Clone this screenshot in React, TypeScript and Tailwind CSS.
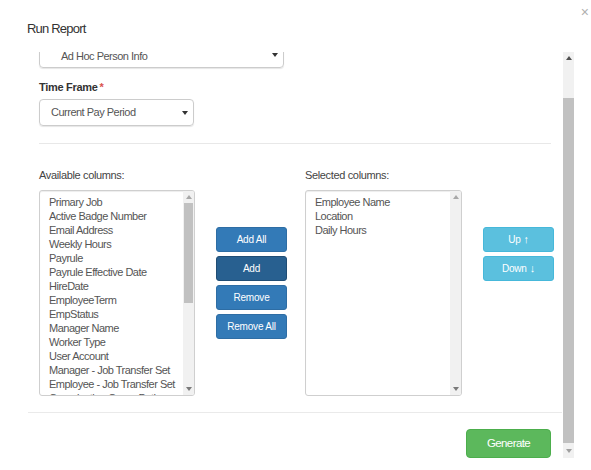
import React from "react";

const available = [
  "Primary Job",
  "Active Badge Number",
  "Email Address",
  "Weekly Hours",
  "Payrule",
  "Payrule Effective Date",
  "HireDate",
  "EmployeeTerm",
  "EmpStatus",
  "Manager Name",
  "Worker Type",
  "User Account",
  "Manager - Job Transfer Set",
  "Employee - Job Transfer Set",
  "Organization Group Path",
];

const selected = ["Employee Name", "Location", "Daily Hours"];

function Caret({ className = "" }: { className?: string }) {
  return (
    <svg width="6" height="4" viewBox="0 0 6 4" className={className}>
      <path d="M0 0 L6 0 L3 4 Z" fill="currentColor" />
    </svg>
  );
}

function CaretUp({ className = "" }: { className?: string }) {
  return (
    <svg width="6" height="4" viewBox="0 0 6 4" className={className}>
      <path d="M0 4 L6 4 L3 0 Z" fill="currentColor" />
    </svg>
  );
}

function ListBox({ items, thumb, width }: { items: string[]; thumb: boolean; width: string }) {
  return (
    <div
      className={`${width} h-[206px] mt-[8px] flex border border-[#cfcfcf] rounded-[3px] shadow-[inset_0_1px_1px_rgba(0,0,0,0.075)] overflow-hidden bg-white`}
    >
      <div className="flex-1 overflow-hidden pt-[4px] pl-[9px] text-[11px] tracking-[-0.5px] leading-[14px] text-[#555]">
        {items.map((it) => (
          <div key={it} className="whitespace-nowrap">
            {it}
          </div>
        ))}
      </div>
      <div className="w-[11px] bg-[#f1f1f1] flex flex-col items-center">
        <div className="h-[12px] flex items-center justify-center text-[#a8a8a8]">
          <CaretUp />
        </div>
        <div className="flex-1 w-full px-[1px]">
          {thumb && <div className="h-[100px] w-full bg-[#c1c1c1]" />}
        </div>
        <div className="h-[12px] flex items-center justify-center text-[#7a7a7a]">
          <Caret />
        </div>
      </div>
    </div>
  );
}

function Btn({ children, cls }: { children: React.ReactNode; cls: string }) {
  return (
    <div
      className={`h-[25px] w-[71px] flex items-center justify-center rounded-[3px] border text-white text-[10px] tracking-[-0.2px] ${cls}`}
    >
      {children}
    </div>
  );
}

export default function App() {
  return (
    <div className="relative w-[591px] h-[470px] bg-white overflow-hidden font-['Liberation_Sans',Arial,sans-serif] text-[#333]">
      <div className="absolute top-[4px] right-[2px] text-[14px] leading-[16px] text-[#b0b0b0]">×</div>
      <div className="h-[52px] pl-[27px] pt-[21px] text-[13px] tracking-[-0.8px] leading-[15px] text-[#333]">Run Report</div>
      <div className="ml-[28px] w-[546px] h-[406px] flex">
        <div className="flex-1 overflow-hidden flex flex-col">
          <div className="pl-[11px] pr-[12px] pb-[16px]">
            <div className="-mt-[11px] h-[27px] w-[245px] border border-[#ccc] rounded-[4px] shadow-[0_1px_1px_rgba(0,0,0,0.1)] flex items-center pt-[3px] pl-[21px] pr-[5px] text-[11px] tracking-[-0.5px] text-[#555]">
              <span className="flex-1 leading-[10px]">Ad Hoc Person Info</span>
              <Caret className="text-[#333] -mt-[3px]" />
            </div>
            <div className="mt-[12px] text-[11px] tracking-[-0.3px] leading-[14px] font-bold text-[#333]">
              Time Frame<span className="text-[#d9534f] ml-[2px]">*</span>
            </div>
            <div className="mt-[5px] h-[27px] w-[155px] border border-[#ccc] rounded-[4px] shadow-[0_1px_1px_rgba(0,0,0,0.1)] flex items-center pl-[11px] pr-[5px] text-[11px] tracking-[-0.5px] text-[#555]">
              <span className="flex-1">Current Pay Period</span>
              <Caret className="text-[#333]" />
            </div>
            <div className="mt-[17px] border-t border-[#e8e8e8]" />
            <div className="mt-[25px] flex">
              <div className="flex flex-col">
                <div className="text-[11px] tracking-[-0.35px] leading-[13px] text-[#444]">Available columns:</div>
                <ListBox items={available} thumb width="w-[156px]" />
              </div>
              <div className="ml-[21px] mt-[58px] flex flex-col gap-[4px]">
                <Btn cls="bg-[#337ab7] border-[#2e6da4]">Add All</Btn>
                <Btn cls="bg-[#286090] border-[#204d74]">Add</Btn>
                <Btn cls="bg-[#337ab7] border-[#2e6da4]">Remove</Btn>
                <Btn cls="bg-[#337ab7] border-[#2e6da4]">Remove All</Btn>
              </div>
              <div className="ml-[18px] flex flex-col">
                <div className="text-[11px] tracking-[-0.35px] leading-[13px] text-[#444]">Selected columns:</div>
                <ListBox items={selected} thumb={false} width="w-[157px]" />
              </div>
              <div className="ml-[21px] mt-[58px] flex flex-col gap-[4px]">
                <Btn cls="bg-[#5bc0de] border-[#46b8da]">Up <span className="ml-[3px] text-[11px]">↑</span></Btn>
                <Btn cls="bg-[#5bc0de] border-[#46b8da]">Down <span className="ml-[3px] text-[11px]">↓</span></Btn>
              </div>
            </div>
          </div>
          <div className="border-t border-[#eaeaea] mr-[1px] pt-[16px] pr-[11px] flex justify-end">
            <div className="h-[29px] w-[85px] rounded-[4px] bg-[#5cb85c] border border-[#4cae4c] text-white text-[11.5px] tracking-[-0.6px] flex items-center justify-center">
              Generate
            </div>
          </div>
        </div>
        <div className="w-[11px] h-[406px] bg-[#f1f1f1] flex flex-col">
          <div className="h-[12px] flex items-center justify-center text-[#505050]">
            <CaretUp />
          </div>
          <div className="h-[34px]" />
          <div className="h-[345px] bg-[#c1c1c1]" />
          <div className="h-[15px] flex items-center justify-center text-[#a0a0a0]">
            <Caret />
          </div>
        </div>
      </div>
    </div>
  );
}
